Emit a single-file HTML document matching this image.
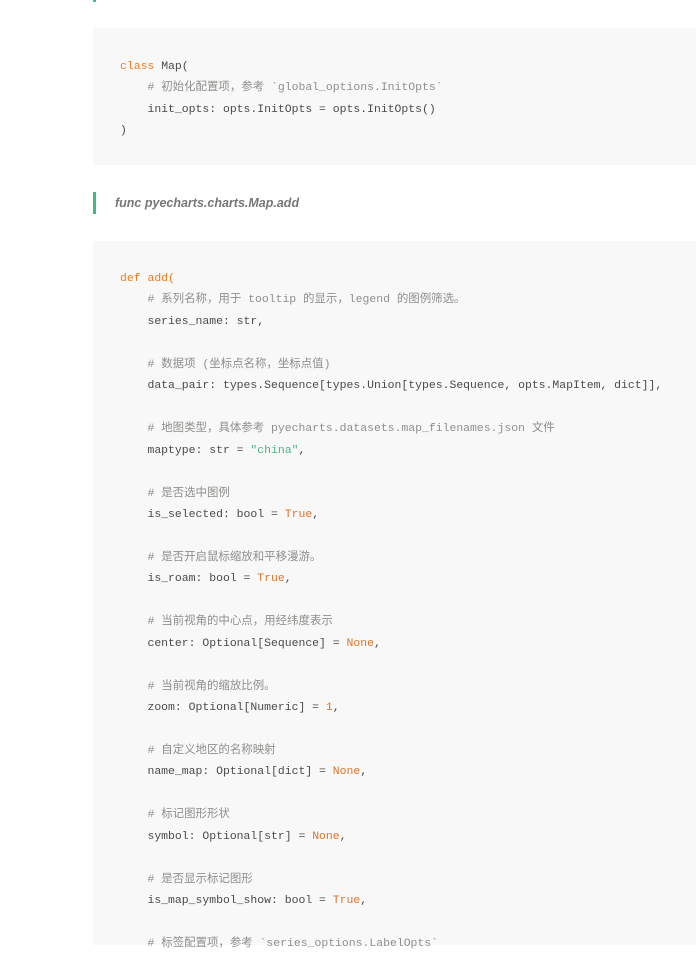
<!DOCTYPE html>
<html><head><meta charset="utf-8"><style>
body{margin:0;background:#fff;width:696px;height:945px;overflow:hidden;position:relative;font-family:"Liberation Sans","Noto Sans CJK SC",sans-serif}
.bar0{position:absolute;left:93px;top:0;width:3px;height:2px;background:#42b983}
pre{margin:0;position:absolute;left:93px;right:0;background:#f8f8f8;font-family:"Liberation Mono","Noto Sans CJK SC",monospace;font-size:11.45px;line-height:21.45px;color:#4a4a4a;padding-left:27px;box-sizing:border-box}
.k{color:#f47a1f}.c{color:#8e908c}.s{color:#42b983}.n{color:#e0742a}
.bq{position:absolute;left:93px;top:192px;height:22px;border-left:3px solid #42b983;padding-left:19px;font-style:italic;font-weight:bold;color:#777;font-size:12.5px;line-height:22px}
</style></head><body>
<div class="bar0"></div>
<pre style="top:28px;height:137px;padding-top:28px"><span class="k">class</span> Map(
    <span class="c"># 初始化配置项，参考 `global_options.InitOpts`</span>
    init_opts: opts.InitOpts = opts.InitOpts()
)</pre>
<div class="bq">func pyecharts.charts.Map.add</div>
<pre style="top:241px;height:704px;padding-top:27px"><span class="k">def add(</span>
    <span class="c"># 系列名称，用于 tooltip 的显示，legend 的图例筛选。</span>
    series_name: str,

    <span class="c"># 数据项 (坐标点名称，坐标点值)</span>
    data_pair: types.Sequence[types.Union[types.Sequence, opts.MapItem, dict]],

    <span class="c"># 地图类型，具体参考 pyecharts.datasets.map_filenames.json 文件</span>
    maptype: str = <span class="s">"china"</span>,

    <span class="c"># 是否选中图例</span>
    is_selected: bool = <span class="n">True</span>,

    <span class="c"># 是否开启鼠标缩放和平移漫游。</span>
    is_roam: bool = <span class="n">True</span>,

    <span class="c"># 当前视角的中心点，用经纬度表示</span>
    center: Optional[Sequence] = <span class="n">None</span>,

    <span class="c"># 当前视角的缩放比例。</span>
    zoom: Optional[Numeric] = <span class="n">1</span>,

    <span class="c"># 自定义地区的名称映射</span>
    name_map: Optional[dict] = <span class="n">None</span>,

    <span class="c"># 标记图形形状</span>
    symbol: Optional[str] = <span class="n">None</span>,

    <span class="c"># 是否显示标记图形</span>
    is_map_symbol_show: bool = <span class="n">True</span>,

    <span class="c"># 标签配置项，参考 `series_options.LabelOpts`</span>
</pre>
</body></html>
